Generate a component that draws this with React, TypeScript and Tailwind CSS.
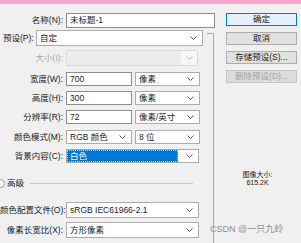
import React from 'react'

const FONT = "font-['Liberation_Sans','Noto_Sans_CJK_SC',sans-serif]"

function Chevron({ color = '#5a5a5a' }: { color?: string }) {
  return (
    <svg width="7" height="4" viewBox="0 0 7 4" className="shrink-0">
      <path d="M0.5 0.5 L3.5 3.5 L6.5 0.5" fill="none" stroke={color} strokeWidth="1" />
    </svg>
  )
}

function Label({ text, w = 'w-[66px]', disabled = false }: { text: string; w?: string; disabled?: boolean }) {
  return (
    <div className={`${w} shrink-0 pr-[3px] text-right whitespace-nowrap ${disabled ? 'text-[#a8a8a8]' : 'text-[#1a1a1a]'}`}>
      {text}
    </div>
  )
}

function Input({ value, w }: { value: string; w: string }) {
  return (
    <div className={`${w} h-full shrink-0 bg-white border border-[#8c8c8c] flex items-center pl-[3px]`}>
      {value}
    </div>
  )
}

function Select({ value, w }: { value: string; w: string }) {
  return (
    <div className={`${w} h-full shrink-0 bg-white border border-[#acacac] flex items-center pl-[3px] pr-[5px]`}>
      <span className="flex-1 whitespace-nowrap">{value}</span>
      <Chevron />
    </div>
  )
}

function Button({ text, primary = false, disabled = false }: { text: string; primary?: boolean; disabled?: boolean }) {
  return (
    <div
      className={`h-[13px] w-[71px] flex items-center justify-center border ${
        primary ? 'border-[#0078d7] bg-[#e5f1fb]' : disabled ? 'border-[#c6c6c6] bg-[#dcdcdc] text-[#a3a3a3]' : 'border-[#adadad] bg-[#e1e1e1]'
      }`}
    >
      {text}
    </div>
  )
}

export default function App() {
  return (
    <div className={`relative w-[301px] h-[243px] overflow-hidden bg-[#f0f0f0] text-[8.5px] leading-none text-[#1a1a1a] flex flex-col ${FONT}`}>
      {/* title strip */}
      <div className="h-[4px] bg-[#f9a7cd] shrink-0" />

      <div className="flex flex-1">
        {/* Left form */}
        <div className="w-[207px] shrink-0 flex flex-col">
          <div className="mt-[9px] h-[15px] flex items-center">
            <Label text="名称(N):" />
            <Input value="未标题-1" w="w-[149px]" />
          </div>

          <div className="mt-[2px] h-[16px] flex items-center">
            <div className="w-[36px] shrink-0 pl-[3px] whitespace-nowrap">预设(P):</div>
            <Select value="自定" w="w-[167px]" />
          </div>

          <div className="mt-[4px] h-[16px] flex items-center">
            <Label text="大小(I):" disabled />
            <div className="w-[132px] h-full shrink-0 bg-[#ececec] border border-[#d9d9d9] flex">
              <div className="flex-1" />
              <div className="w-[16px] h-full bg-[#f7f7f7] flex items-center justify-center">
                <Chevron color="#b5b5b5" />
              </div>
            </div>
          </div>

          <div className="mt-[6px] h-[14px] flex items-center">
            <Label text="宽度(W):" />
            <Input value="700" w="w-[66px]" />
            <div className="w-[3px] shrink-0" />
            <Select value="像素" w="w-[65px]" />
          </div>

          <div className="mt-[5px] h-[14px] flex items-center">
            <Label text="高度(H):" />
            <Input value="300" w="w-[66px]" />
            <div className="w-[3px] shrink-0" />
            <Select value="像素" w="w-[65px]" />
          </div>

          <div className="mt-[5px] h-[14px] flex items-center">
            <Label text="分辨率(R):" />
            <Input value="72" w="w-[66px]" />
            <div className="w-[3px] shrink-0" />
            <Select value="像素/英寸" w="w-[65px]" />
          </div>

          <div className="mt-[6px] h-[14px] flex items-center">
            <Label text="颜色模式(M):" />
            <Select value="RGB 颜色" w="w-[66px]" />
            <div className="w-[3px] shrink-0" />
            <Select value="8 位" w="w-[65px]" />
          </div>

          <div className="mt-[5px] h-[14px] flex items-center">
            <Label text="背景内容(C):" />
            <div className="w-[133px] h-full shrink-0 bg-white border border-[#acacac] flex items-center">
              <div className="w-[111px] h-full bg-[#0078d7] border border-dotted border-[#9cc8ee] flex items-center pl-[2px] text-white">
                白色
              </div>
              <div className="flex-1 flex items-center justify-end pr-[5px]">
                <Chevron />
              </div>
            </div>
          </div>

          <div className="mt-[14px] h-[12px] flex items-center">
            <div className="ml-[-4px] w-[9px] h-[9px] shrink-0 rounded-full border border-[#9a9a9a] bg-[#f7f7f7]" />
            <div className="ml-[2px] whitespace-nowrap">高级</div>
            <div className="ml-[6px] w-[163px] h-px bg-[#c9c9c9]" />
          </div>

          <div className="mt-[13px] h-[16px] flex items-center">
            <Label text="颜色配置文件(O):" />
            <Select value="sRGB IEC61966-2.1" w="w-[133px]" />
          </div>

          <div className="mt-[4px] h-[16px] flex items-center">
            <Label text="像素长宽比(X):" />
            <Select value="方形像素" w="w-[133px]" />
          </div>
        </div>

        {/* separator */}
        <div className="w-[7px] shrink-0 mt-[29px] border-t border-r border-[#ababab]" />

        {/* Right buttons */}
        <div className="flex-1 flex flex-col">
          <div className="ml-[12px] mt-[9px] flex flex-col gap-[6px]">
            <Button text="确定" primary />
            <Button text="取消" />
            <Button text="存储预设(S)..." />
            <Button text="删除预设(D)..." disabled />
          </div>
          <div className="mt-[88px] flex flex-col items-center gap-[1px] text-[7px]">
            <div>图像大小:</div>
            <div>615.2K</div>
          </div>
        </div>
      </div>

      {/* watermark */}
      <div className="absolute left-[210px] top-[225px] text-[9px] text-[#8f8f8f] whitespace-nowrap">
        CSDN @一只九岭
      </div>
    </div>
  )
}
